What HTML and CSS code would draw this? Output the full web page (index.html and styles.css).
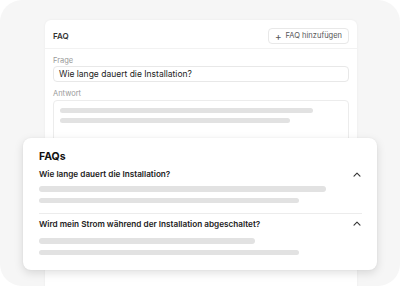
FILE: index.html
```html
<!DOCTYPE html>
<html lang="de">
<head>
  <meta charset="UTF-8">
  <meta name="viewport" content="width=device-width, initial-scale=1.0">
  <title>FAQ</title>
  <link rel="stylesheet" href="styles.css">
</head>
<body>
  <div class="frame">
    <div class="editor">
      <div class="editor-head">
        <span class="editor-title">FAQ</span>
        <button class="add-btn"><span class="plus">+</span> FAQ hinzufügen</button>
      </div>
      <div class="editor-body">
        <label class="field-label">Frage</label>
        <div class="input">Wie lange dauert die Installation?</div>
        <label class="field-label">Antwort</label>
        <div class="textarea">
          <div class="skel" style="width: 253px"></div>
          <div class="skel" style="width: 230px"></div>
        </div>
      </div>
    </div>

    <div class="faq-card">
      <h2>FAQs</h2>
      <div class="faq-item">
        <div class="faq-q">
          <span>Wie lange dauert die Installation?</span>
          <svg width="8" height="5" viewBox="0 0 8 5"><path d="M1 4.2 L4 1.2 L7 4.2" fill="none" stroke="#333" stroke-width="1.1" stroke-linecap="round" stroke-linejoin="round"/></svg>
        </div>
        <div class="faq-a">
          <div class="skel" style="width: 287px"></div>
          <div class="skel" style="width: 260px"></div>
        </div>
      </div>
      <div class="faq-item">
        <div class="faq-q">
          <span>Wird mein Strom während der Installation abgeschaltet?</span>
          <svg width="8" height="5" viewBox="0 0 8 5"><path d="M1 4.2 L4 1.2 L7 4.2" fill="none" stroke="#333" stroke-width="1.1" stroke-linecap="round" stroke-linejoin="round"/></svg>
        </div>
        <div class="faq-a">
          <div class="skel" style="width: 216px"></div>
          <div class="skel" style="width: 260px"></div>
        </div>
      </div>
    </div>
  </div>
</body>
</html>
```

FILE: styles.css
```css
body { margin: 0; background: #fff; font-family: Inter, "Noto Sans", sans-serif; color: #1f1f1f; }
.frame { position: relative; width: 400px; height: 286px; background: #f6f6f6; border-radius: 22px; overflow: hidden; }

.editor { margin: 20px 0 0 45px; width: 312px; height: 270px; background: #fff; border-radius: 6px 6px 0 0; box-shadow: 0 0 3px rgba(0, 0, 0, 0.05); }
.editor-head { display: flex; align-items: center; justify-content: space-between; height: 29px; padding: 3px 8px 0; border-bottom: 1px solid #f2f2f2; box-sizing: border-box; }
.editor-title { font-size: 8px; font-weight: 600; color: #333; }
.add-btn { font-family: inherit; font-size: 7.5px; color: #555; background: #fff; border: 1px solid #e8e8e8; border-radius: 4px; height: 16px; width: 81px; padding: 0; display: flex; align-items: center; justify-content: center; gap: 4px; }
.add-btn .plus { font-size: 10px; font-weight: 400; line-height: 1; }
.editor-body { padding: 0 8px; display: flex; flex-direction: column; }
.field-label { font-size: 7.5px; color: #9a9a9a; height: 10px; line-height: 10px; margin-top: 7px; }
.input { height: 16px; box-sizing: border-box; border: 1px solid #e8e8e8; border-radius: 4px; padding: 0 5px; font-size: 8.5px; line-height: 14px; color: #222; }
.textarea { height: 80px; border: 1px solid #ececec; border-radius: 4px; margin-top: 1px; padding: 7px 6px; box-sizing: border-box; display: flex; flex-direction: column; gap: 5px; }
.textarea .skel { height: 5px; }

.skel { background: #e2e2e2; border-radius: 3px; }

.faq-card { position: absolute; left: 23px; top: 138px; width: 354px; height: 132px; box-sizing: border-box; background: #fff; border-radius: 8px; box-shadow: 0 3px 10px rgba(0, 0, 0, 0.13), 0 0 2px rgba(0, 0, 0, 0.06); padding: 13px 15px 0 16px; }
.faq-card h2 { margin: 0; font-size: 10.5px; line-height: 12px; font-weight: 700; color: #111; }
.faq-item { padding: 5px 0 10px; }
.faq-item + .faq-item { border-top: 1px solid #ececec; padding-top: 3.5px; }
.faq-q { display: flex; justify-content: space-between; align-items: center; height: 12px; font-size: 8.2px; font-weight: 600; color: #222; }
.faq-q svg { margin-right: 1px; }
.faq-a { margin-top: 6px; display: flex; flex-direction: column; gap: 6px; }
.faq-item + .faq-item .faq-a { margin-top: 8.5px; }
.faq-a .skel { height: 5.5px; }
```
